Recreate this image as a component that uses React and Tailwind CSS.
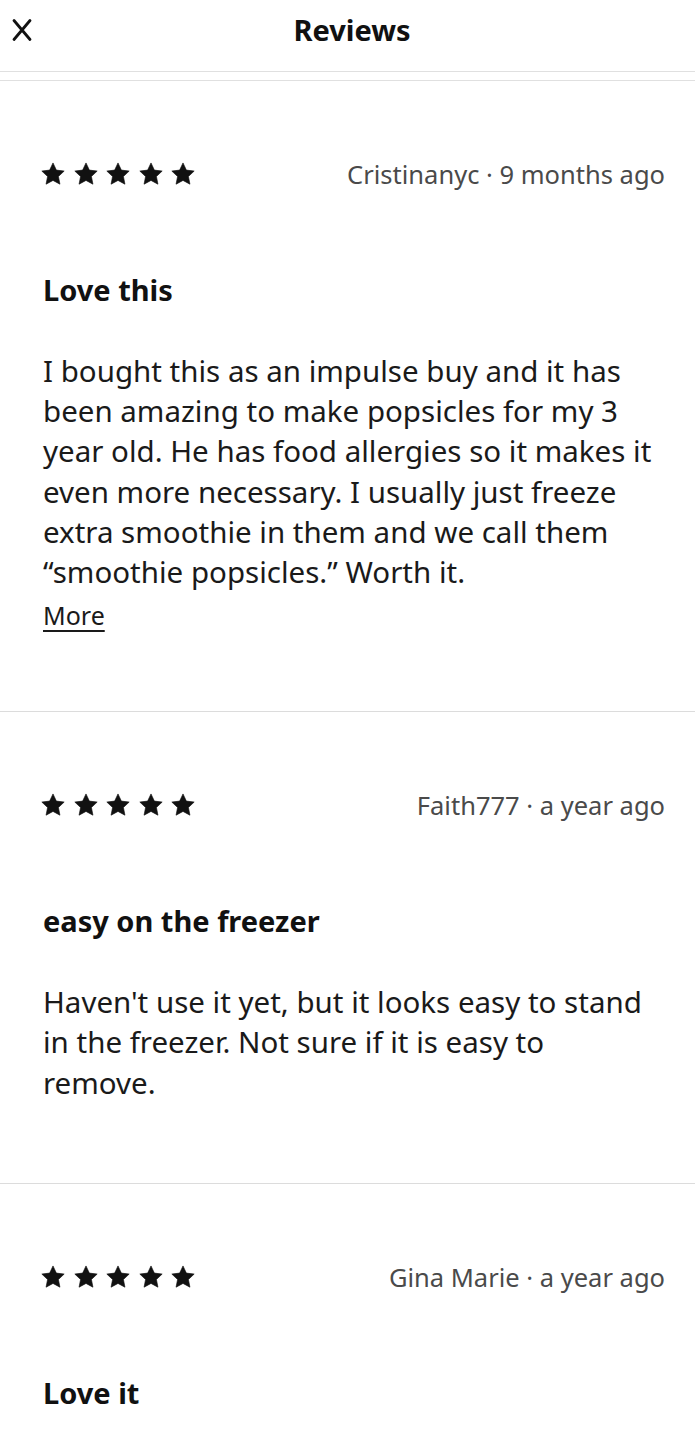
const reviews = [
    {
        author: 'Cristinanyc',
        when: '9 months ago',
        title: 'Love this',
        body: 'I bought this as an impulse buy and it has been amazing to make popsicles for my 3 year old. He has food allergies so it makes it even more necessary. I usually just freeze extra smoothie in them and we call them \u201csmoothie popsicles.\u201d Worth it.',
        more: true,
    },
    {
        author: 'Faith777',
        when: 'a year ago',
        title: 'easy on the freezer',
        body: "Haven't use it yet, but it looks easy to stand in the freezer. Not sure if it is easy to remove.",
    },
    {
        author: 'Gina Marie',
        when: 'a year ago',
        title: 'Love it',
        body: '',
    },
];

function Star() {
    return (
        <svg viewBox="0 0 24 24" className="w-[26px] h-[26px]" fill="#111">
            <path d="M12 1.8l3.1 6.6 7.2.9-5.3 5 1.4 7.1L12 17.9l-6.4 3.5 1.4-7.1-5.3-5 7.2-.9z" strokeLinejoin="round" stroke="#111" strokeWidth="0.6" />
        </svg>
    );
}

function Review({ review }) {
    return (
        <div className={`pl-[43px] pr-[35px] pt-[76px] border-b border-[#dcdcdc] ${review.more ? 'pb-[76px]' : 'pb-[80px]'}`}>
            <div className="flex items-center justify-between h-[34px] mr-[-5px]">
                <div className="flex gap-[6.5px] ml-[-3px]">
                    {[0, 1, 2, 3, 4].map(i => <Star key={i} />)}
                </div>
                <p className="text-[25.5px] text-[#4a4a4a] leading-[34px]">
                    {review.author} · {review.when}
                </p>
            </div>

            <h2 className="mt-[81px] text-[29px] font-bold text-[#111] leading-[36px]">{review.title}</h2>

            {review.body && (
                <p className="mt-[43px] text-[29.5px] text-[#1a1a1a] leading-[40.2px]">{review.body}</p>
            )}
            {review.more && (
                <a className="block mt-[3px] text-[25px] leading-[40px] text-[#1a1a1a] underline underline-offset-[5px]">More</a>
            )}
        </div>
    );
}

export default function App() {
    return (
        <div className="w-[695px] h-[1434px] bg-white overflow-hidden font-['Noto_Sans',sans-serif]">
            {/* Top bar */}
            <header className="h-[72px] border-b border-[#e0e0e0] flex items-center px-[12px]">
                <svg viewBox="0 0 20 24" className="w-[20px] h-[24px] mt-[-12px]" fill="none" stroke="#111" strokeWidth="2.8" strokeLinecap="round">
                    <path d="M2 2.5l16 19M18 2.5L2 21.5" />
                </svg>
                <h1 className="flex-1 text-center text-[29px] font-bold text-[#111] mt-[-12px] mr-[11px]">Reviews</h1>
            </header>
            <div className="h-[9px] border-b border-[#e0e0e0]" />

            {reviews.map(r => (
                <Review key={r.author} review={r} />
            ))}
        </div>
    );
}
